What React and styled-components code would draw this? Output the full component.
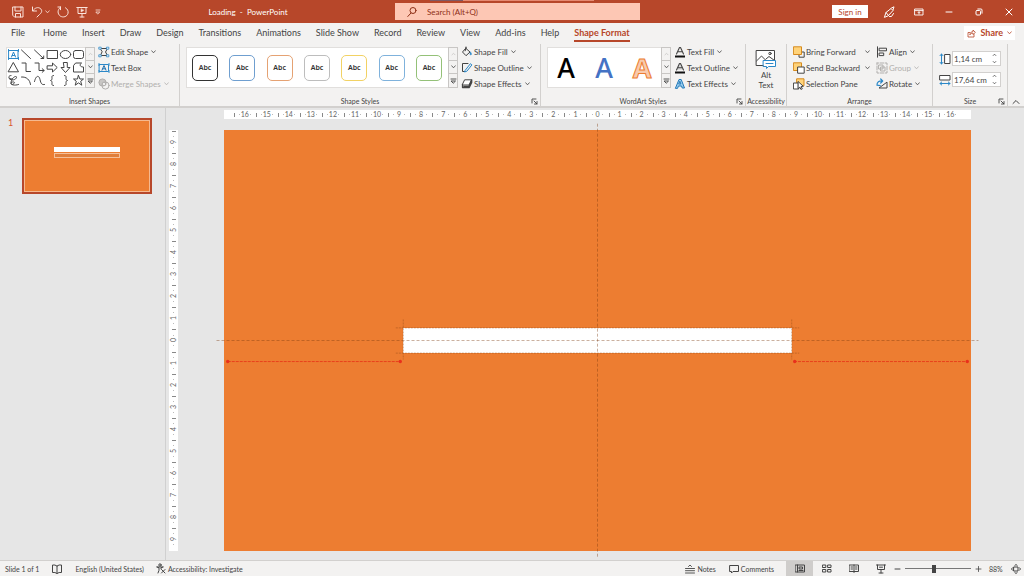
import React, { useState } from 'react'
import styled, { createGlobalStyle, css } from 'styled-components'

const brand = '#b7472a'
const orange = '#ed7d31'
const chrome = '#f3f2f1'
const ink = '#444444'
const line = '#c8c6c4'
const blue = '#2b88c8'

const GlobalStyle = createGlobalStyle`
* { box-sizing: border-box; }
body { margin: 0; }
button, input { font: inherit; color: inherit; }
body, button, input { font-family: Lato, "Noto Sans", sans-serif; }
`;

const Page = styled.div`
display: flex;
flex-direction: column;
height: 100vh;
overflow: hidden;
background: #e6e6e6;
color: ${ink};
font-size: 8px;
line-height: 10px;
`;

const Button = styled.button`
display: flex;
align-items: center;
justify-content: center;
padding: 0;
border: 0;
background: none;
white-space: nowrap;
`;

const Svg = styled.svg`
display: block;
flex: none;
fill: none;
stroke: currentColor;
stroke-width: 1;
stroke-linecap: round;
stroke-linejoin: round;
`;

const Icon = ({ w = 12, h = 12, children, ...rest }) => (
  <Svg width={w} height={h} viewBox={`0 0 ${w} ${h}`} aria-hidden="true" {...rest}>{children}</Svg>
)

const Chevron = () => <Icon w={5} h={4}><path d="M.7.8 2.5 2.8 4.3.8" strokeWidth=".8" /></Icon>

/* ---------- title bar ---------- */

const TitleBar = styled.header`
position: relative;
display: grid;
grid-template-columns: 395fr 245fr 384fr;
align-items: center;
flex: none;
height: 23px;
background: ${brand};
color: #fff;
&::before {
  content: '';
  position: absolute;
  top: 0;
  left: 42%;
  width: 16%;
  height: 1px;
  background: linear-gradient(90deg, #7d5a66 20%, #e58b73 20%);
}
`;

const TitleLeft = styled.div`
display: flex;
align-items: center;
padding-left: 12px;
`;

const QuickAccess = styled.div`
display: flex;
align-items: center;
gap: 7px;
color: #fbe3da;
`;

const QuickPair = styled.div`
display: flex;
gap: 2px;
`;

const QuickButton = styled(Button)`
height: 20px;
`;

const DocTitle = styled.div`
flex: 1;
text-align: center;
white-space: pre;
`;

const Search = styled.label`
display: flex;
align-items: center;
gap: 10px;
height: 17px;
padding-left: 12px;
background: #fdc7b4;
color: #8e2f16;
`;

const SearchInput = styled.input`
flex: 1;
min-width: 0;
padding: 0;
border: 0;
outline: 0;
background: none;
&::placeholder { color: #8e2f16; opacity: 1; }
`;

const TitleRight = styled.div`
display: flex;
align-items: center;
justify-content: flex-end;
`;

const SignIn = styled(Button)`
width: 36px;
height: 13px;
margin-right: 6px;
background: #fff;
color: ${brand};
`;

const WindowButton = styled(Button)`
width: 30px;
height: 22px;
`;

/* ---------- tabs ---------- */

const TabRow = styled.nav`
display: flex;
align-items: flex-start;
flex: none;
gap: 15px;
height: 21px;
padding: 0 9px 0 11px;
background: ${chrome};
font-size: 9px;
line-height: 12px;
`;

const Tab = styled(Button)`
height: 19px;
border-top: 2px solid transparent;
border-bottom: 2px solid transparent;
&:first-child { margin-right: 3px; }
${(p) => p.$active && css`
color: ${brand};
border-bottom-color: ${brand};
font-weight: 700;
`}
`;

const Share = styled(Button)`
gap: 4px;
height: 14px;
margin-top: 3px;
margin-left: auto;
padding: 0 3px;
background: #fff;
color: ${brand};
font-weight: 700;
`;

/* ---------- ribbon ---------- */

const Ribbon = styled.section`
display: flex;
flex: none;
height: 64px;
background: ${chrome};
border-bottom: 2px solid #d2d0ce;
`;

const Group = styled.div`
display: flex;
flex-direction: column;
flex: 0 0 auto;
min-width: ${(p) => p.$width}px;
padding: 0 ${(p) => (p.$tight ? 0 : 6)}px;
border-right: 1px solid #d2d0ce;
`;

const GroupBody = styled.div`
display: flex;
flex: 1;
gap: ${(p) => p.$gap || 3}px;
padding-top: ${(p) => p.$top || 0}px;
`;

const GroupFoot = styled.div`
display: grid;
grid-template-columns: 1fr auto 1fr;
align-items: center;
height: 10px;
font-size: 7px;
line-height: 10px;
white-space: nowrap;
& > button { justify-self: end; margin-right: -4px; }
`;

const Gallery = styled.div`
display: flex;
height: 41px;
margin-top: 3px;
width: ${(p) => p.$width}px;
border: 1px solid #e1dfdd;
background: #fff;
`;

const ShapeGrid = styled.div`
display: grid;
flex: 1;
grid-template-columns: repeat(6, 13px);
grid-auto-rows: 13px;
`;

const StyleList = styled.div`
display: flex;
flex: 1;
align-items: center;
justify-content: space-between;
padding: 0 7px 0 5px;
`;

const StyleSwatch = styled(Button)`
width: 26px;
height: 26px;
border: 1px solid ${(p) => p.$color};
border-radius: 5px;
color: #333;
font-family: "Noto Sans", sans-serif;
font-size: 7px;
font-weight: 600;
`;

const WordArtButton = styled(Button)`
width: 26px;
height: 38px;
font-family: "Noto Sans", sans-serif;
font-size: 27px;
font-weight: ${(p) => p.$weight || 500};
line-height: 38px;
color: ${(p) => p.$color};
-webkit-text-stroke: ${(p) => (p.$outline ? `1px ${p.$outline}` : '0')};
`;

const Scroller = styled.div`
display: grid;
grid-template-rows: repeat(3, 1fr);
width: 10px;
margin: -1px;
background: ${chrome};
`;

const ScrollButton = styled(Button)`
border: 1px solid ${line};
color: ${(p) => (p.disabled ? line : ink)};
& + & { border-top: 0; }
`;

const Commands = styled.div`
display: grid;
grid-auto-rows: 16px;
align-content: start;
`;

const Command = styled(Button)`
justify-content: flex-start;
gap: 1px;
color: ${(p) => (p.disabled ? '#b1afad' : ink)};
& > svg + svg { margin-left: ${(p) => (p.$spread ? 'auto' : '2px')}; }
`;

const AltText = styled(Button)`
flex: 1;
flex-direction: column;
justify-content: flex-start;
padding-top: 5px;
& > svg { margin-bottom: 1px; }
`;

const SizeFields = styled.div`
display: grid;
flex: 1;
gap: 6px;
align-content: start;
`;

const SizeField = styled.label`
display: flex;
align-items: center;
gap: 1px;
height: 15px;
`;

const SizeBox = styled.span`
display: flex;
align-items: center;
width: 49px;
height: 15px;
padding: 0 3px 0 1px;
border: 1px solid #d2d0ce;
background: #fff;
`;

const SizeInput = styled.input`
flex: 1;
min-width: 0;
padding: 0;
border: 0;
outline: 0;
background: none;
`;

const Collapse = styled(Button)`
align-items: flex-end;
width: 17px;
margin-left: auto;
padding-bottom: 1px;
`;

/* ---------- workspace ---------- */

const Workspace = styled.main`
display: flex;
flex: 1;
min-height: 0;
`;

const Thumbnails = styled.aside`
display: flex;
align-items: flex-start;
gap: 6px;
width: 166px;
padding: 10px 13px 0 8px;
border-right: 1px solid #d0d0d0;
color: #d8572f;
font-size: 9px;
line-height: 10px;
`;

const Thumb = styled(Button)`
flex: 1;
flex-direction: column;
gap: 1px;
height: 76px;
padding-bottom: 7px;
border: 2px solid ${brand};
background: ${orange};
box-shadow: inset 0 0 0 1px #f6b98f;
`;

const ThumbBar = styled.span`
width: 66px;
height: 5px;
background: ${(p) => (p.$empty ? '#e07f3c' : '#fff')};
border: ${(p) => (p.$empty ? '1px solid #f4c09a' : '0')};
`;

const SlideNumber = styled.span`
width: 8px;
`;

const Editor = styled.div`
display: grid;
flex: 1;
grid-template-columns: 9px 1fr;
grid-template-rows: 9px 1fr;
gap: 11px 46px;
padding: 2px 53px 9px 3px;
`;

const Ruler = styled.div`
display: flex;
flex-direction: ${(p) => (p.$vertical ? 'column' : 'row')};
justify-content: center;
overflow: hidden;
min-width: 0;
min-height: 0;
background: #fff;
color: #666;
font-size: 7px;
line-height: 9px;
grid-area: ${(p) => (p.$vertical ? '2 / 1' : '1 / 2')};
`;

const Mark = styled.span`
display: flex;
align-items: center;
justify-content: center;
flex: 0 0 calc(100% / ${(p) => p.$units});
min-width: 0;
min-height: 0;
background-repeat: no-repeat;
background-image: linear-gradient(#888, #888), linear-gradient(#bbb, #bbb), linear-gradient(#bbb, #bbb);
${(p) => p.$vertical ? css`
background-size: 4px 1px, 1px 1px, 1px 1px;
background-position: 50% 0, 50% 24%, 50% 76%;
& > span { writing-mode: vertical-rl; transform: rotate(180deg); }
` : css`
background-size: 1px 4px, 1px 1px, 1px 1px;
background-position: 0 50%, 24% 50%, 76% 50%;
`}
`;

const Slide = styled.div`
position: relative;
grid-area: 2 / 2;
background: ${orange};
`;

const LoadingBar = styled.div`
position: absolute;
left: 24%;
top: 47%;
width: 52%;
height: 6%;
background: #fff;
`;

const Guides = styled.svg`
position: absolute;
inset: 0;
width: 100%;
height: 100%;
overflow: visible;
`;

/* ---------- status bar ---------- */

const StatusBar = styled.footer`
display: flex;
align-items: center;
flex: none;
height: 16px;
padding: 0 3px 0 5px;
border-top: 1px solid #d2d0ce;
background: ${chrome};
font-size: 7px;
line-height: 10px;
white-space: nowrap;
`;

const StatusItems = styled.div`
display: flex;
align-items: center;
gap: 12px;
`;

const StatusRight = styled.div`
display: flex;
align-items: center;
margin-left: auto;
`;

const StatusButton = styled(Button)`
gap: 2px;
margin-right: ${(p) => p.$after || 0}px;
`;

const ViewButton = styled(Button)`
width: 27px;
height: 15px;
background: ${(p) => (p.$active ? '#cfcdcb' : 'none')};
`;

const Zoom = styled.input`
appearance: none;
width: 66px;
height: 12px;
margin: 0 4px;
background: linear-gradient(#777, #777) center / 100% 1px no-repeat;
&::-webkit-slider-thumb {
  appearance: none;
  width: 4px;
  height: 8px;
  background: #444;
}
`;

const Percent = styled.span`
width: 29px;
padding-left: 7px;
`;

const EditPoints = () => (
  <Icon><path d="M2.5 2.5h7L7.5 6l2 3.5h-7L4 6z" /><g fill="#fff" stroke={blue} strokeWidth=".8"><path d="M1.2 1.2h2v2h-2zM8.8 1.2h2v2h-2zM1.2 8.8h2v2h-2zM8.8 8.8h2v2h-2z" /></g></Icon>
)
const TextBoxIcon = () => (
  <Icon><path d="M1.5 2.5h9v7h-9z" stroke={blue} /><path d="m4 8.2 2-4.7 2 4.7M4.8 6.8h2.4" stroke="#1e6fb0" /><path d="M1 1.5v2M11 1.5v2M1 8.5v2M11 8.5v2" stroke={blue} /></Icon>
)
const MergeIcon = () => (
  <Icon><circle cx="4.5" cy="4.5" r="3.6" fill="#c8c6c4" /><circle cx="7.5" cy="7.5" r="3.6" /><circle cx="6" cy="6" r="1.8" fill="#eee" /></Icon>
)
const FillIcon = () => (
  <Icon><path d="m5 2.5 4 3.5-4 3.7L1.8 6.3zM5 2.5V1M5 1.6l-.8 3.2" /><path d="M9.6 6.2c.6 1 1 1.5.9 2-.2.8-1.4.8-1.6 0 0-.5.4-1.2.7-2z" fill={blue} stroke={blue} strokeWidth=".6" /></Icon>
)
const OutlineIcon = () => (
  <Icon><path d="M7 1.5H1.5v8H4" /><path d="M4.3 8.2 9.4 1.7l1.5 1.2-5 6.3-2 .7z" stroke={blue} /></Icon>
)
const EffectsIcon = () => (
  <Icon><path d="M4 1.8h6.7L8.3 7H1.5z" fill="#fff" /><path d="M1.5 7v2.5h6.8L10.7 4.4V1.8L8.3 7v2.5M3 8.3h4.5" strokeWidth="1.3" /></Icon>
)
const LetterIcon = ({ color = ink, fill = 'none' }) => (
  <Icon><path d="m2.5 8 3-6.5h1L9.5 8M3.6 5.8h4.8" stroke={color} fill={fill} strokeWidth="1.1" /><path d="M1 9.5h10v2H1z" fill="#111" stroke="none" /></Icon>
)
const TextEffectsIcon = () => (
  <Icon><path d="M1.5 10 5 1.5h2.2l3.3 8.5H8.2l-.6-2H4.4l-.7 2zM5.1 6h1.8L6 3.6z" stroke="#1f78b8" fill="#9fd0f0" /></Icon>
)
const LayerIcon = ({ kind }) => (
  <Icon>
    {kind === 'forward' && <><path d="M8.5 6h2.7v5.2H6V8.5" /><path d="M.8.8h7.7v7.7H.8z" fill="#ffd37a" stroke="#d68a1d" /></>}
    {kind === 'backward' && <><path d="M.8.8h7.7v7.7H.8z" fill="#ffd37a" stroke="#d68a1d" /><path d="M5 5h6.2v6.2H5z" fill="#fff" /></>}
    {kind === 'select' && <><path d="M4 .8h7v7H4z" fill="#ffd37a" stroke="#d68a1d" /><path d="M.8 5h5v6h-5z" fill="#fff" /><path d="m5.3 3.7 5 4.6-2.2.2 1.2 2.3-1.4.6-1-2.3-1.6 1.4z" fill="#fff" /></>}
  </Icon>
)
const AlignIcon = () => <Icon><path d="M1.5.8v10.4M3.5 2.2h7v2.6h-7zM3.5 7h4.2v2.6H3.5z" /></Icon>
const GroupIcon = () => <Icon><path d="M1 1h1.6M9.4 1H11v1.6M11 9.4V11H9.4M2.6 11H1V9.4M1 2.6V1M1 4v4M11 4v4M4 1h4M4 11h4M3 3h4v4H3zM5 5h4v4H5z" /></Icon>
const RotateIcon = () => <Icon><path d="M11 4.5V10H3.4z" /><path d="M1 7.2C.8 4.2 3 2.6 6.5 3M4.7 1l2 2-2 2M1 7.2l3.2.4" stroke={blue} strokeWidth="1.2" /></Icon>

const shapes = [
  ['Text box', <path d="M2 2.5h9v8H2zM1.5 1.5v2M11.5 1.5v2M1.5 9.5v2M11.5 9.5v2M4.5 9l2-5 2 5M5.2 7.5h2.6" stroke={blue} />],
  ['Line', <path d="m1.5 2 9 8.5" />],
  ['Arrow', <path d="m1.5 2 9 8.5M8 10.5h2.7V8" />],
  ['Rectangle', <path d="M1.5 2.5h10v8h-10z" />],
  ['Oval', <ellipse cx="6.5" cy="6.5" rx="5.2" ry="4" />],
  ['Rounded rectangle', <rect x="1.5" y="2.5" width="10" height="8" rx="2" />],
  ['Triangle', <path d="m6.5 1.8 5 9h-10z" />],
  ['Elbow', <path d="M2 2h4v8.5h4.5" />],
  ['Elbow arrow', <path d="M2 2h4v7.5h5M9.2 7.7l2 1.8-2 1.8" />],
  ['Right arrow', <path d="M1.5 4.8h5V2l4.7 4.5L6.5 11V8.2h-5z" />],
  ['Down arrow', <path d="M4.7 1.5h3.6v5H11l-4.5 5L2 6.5h2.7z" />],
  ['Freeform shape', <path d="M4 2h5.500C7.500 3.500 7.500 6 11.500 6v5h-10V5z" />],
  ['Scribble', <path d="M5.500 5C1 5.500.5 1.500 4 1.500M2 4.500C5 7.500 9 5.500 9.500 3.500S6 2.500 4.500 6.500 5 11.500 7 9.500s-2.500-2-3-.5 3 3 7.500 1.500" />],
  ['Arc', <path d="M1.5 3c5-.5 8.500 3 9 7.500" />],
  ['Curve', <path d="M1.5 7.5C3 1 6 1 7 5.500s2 5.500 4.500 5" />],
  ['Left brace', <path d="M7.5 1.5c-2 0-1.500 1-1.500 3 0 1.200-.5 1.800-1.500 2 1 .2 1.500.8 1.500 2 0 2-.5 3 1.500 3" />],
  ['Right brace', <path d="M5.5 1.5c2 0 1.500 1 1.500 3 0 1.200.5 1.800 1.500 2-1 .2-1.500.8-1.500 2 0 2 .5 3-1.500 3" />],
  ['Star', <path d="m6.5 1.5 1.400 3.500h3.600L8.700 7.300l1.100 3.900-3.300-2.300-3.300 2.300 1.100-3.900L1.500 5h3.600z" />],
]

const swatches = ['#333333', '#6f9fd0', '#e5a273', '#bdbdbd', '#f2d264', '#7fb2dc', '#94c178']

const tabs = ['File', 'Home', 'Insert', 'Draw', 'Design', 'Transitions', 'Animations', 'Slide Show', 'Record', 'Review', 'View', 'Add-ins', 'Help', 'Shape Format']

const GalleryScroll = () => (
  <Scroller>
    <ScrollButton disabled aria-label="Row up"><Icon w={5} h={4}><path d="M1 2.800 2.500 1.300 4 2.800" strokeWidth=".8" /></Icon></ScrollButton>
    <ScrollButton aria-label="Row down"><Chevron /></ScrollButton>
    <ScrollButton aria-label="More"><Icon w={7} h={6}><path d="M1 1h5M1.500 3h4l-2 2z" strokeWidth=".9" /></Icon></ScrollButton>
  </Scroller>
)

const Foot = ({ label, launcher }) => (
  <GroupFoot>
    <span />
    <span>{label}</span>
    {launcher && <Button aria-label={`${label} options`}><Icon w={7} h={7}><path d="M1 5V1h4M3 3l3 3M6 3.500V6H3.500" strokeWidth=".9" /></Icon></Button>}
  </GroupFoot>
)

const Size = ({ id, label, value, icon }) => (
  <SizeField htmlFor={id} aria-label={label}>
    {icon}
    <SizeBox>
      <SizeInput id={id} defaultValue={value} aria-label={label} />
      <Icon w={5} h={11}><path d="m1.200 2.500 1.300-1.300 1.300 1.300M1.200 8.500l1.300 1.300 1.300-1.300" strokeWidth=".8" /></Icon>
    </SizeBox>
  </SizeField>
)

const RulerMarks = ({ max, units, vertical }) => (
  <Ruler $vertical={vertical}>
    {Array.from({ length: max * 2 + 1 }, (_, i) => (
      <Mark key={i} $units={units} $vertical={vertical}><span>{Math.abs(i - max)}</span></Mark>
    ))}
  </Ruler>
)

const Header = () => (
  <TitleBar>
    <TitleLeft>
      <QuickAccess>
        <QuickButton aria-label="Save"><Icon><path d="M1 1h10v10H2.500L1 9.500zM3 1v4h6V1M3.500 11V7.500h5V11" /></Icon></QuickButton>
        <QuickPair>
          <QuickButton aria-label="Undo"><Icon><path d="M1.500 1v4h4M1.800 4.800C4 1.500 7 1 9 2.300c3 2 1.500 4.700-.5 6.200L6 11" /></Icon></QuickButton>
          <QuickButton aria-label="Undo list"><Chevron /></QuickButton>
        </QuickPair>
        <QuickButton aria-label="Redo"><Icon><path d="M3.500 1H.9M3.500 1v2.700M3.300 1.500C0 4 .6 8 3.200 10c3 2 7 .6 7.800-2.700.5-2.400-.5-4.300-2.500-5.500" /></Icon></QuickButton>
        <QuickButton aria-label="Start from beginning"><Icon><path d="M.8 1.500h10.400M2 1.500V7.500h8v-6M6 7.500V11M4 11h4" /><path d="M5 3v3l2.700-1.500z" fill="currentColor" strokeWidth=".5" /></Icon></QuickButton>
        <QuickButton aria-label="Customize"><Icon w={6} h={6}><path d="M1 1h4M1.200 3h3.600L3 4.800z" strokeWidth=".8" /></Icon></QuickButton>
      </QuickAccess>
      <DocTitle>Loading  -  PowerPoint</DocTitle>
    </TitleLeft>
    <Search htmlFor="search">
      <Icon w={10}><circle cx="6" cy="4.500" r="3" /><path d="M4 7 .8 10.500" /></Icon>
      <SearchInput id="search" placeholder="Search (Alt+Q)" aria-label="Search" />
    </Search>
    <TitleRight>
      <SignIn>Sign in</SignIn>
      <WindowButton aria-label="Ink"><Icon><path d="M1.500 11 3 6.500 8 2.500l2 2-4.500 5zM3 6.500l2.500 3M8.500 2 11 .8l-1 3.200M6.500 10.500h2l2-3" /></Icon></WindowButton>
      <WindowButton aria-label="Ribbon display options"><Icon w={10} h={8}><path d="M1 1h8v6H1zM1 2.600h8M5 6V4M4 4.700l1-1 1 1" strokeWidth=".9" /></Icon></WindowButton>
      <WindowButton aria-label="Minimize"><Icon w={8} h={8}><path d="M1 4h6" /></Icon></WindowButton>
      <WindowButton aria-label="Restore"><Icon w={8} h={8}><rect x="1" y="2.500" width="4.500" height="4.500" rx="1" /><path d="M2.800 1h3.200q1 0 1 1v3.200" /></Icon></WindowButton>
      <WindowButton aria-label="Close"><Icon w={8} h={8}><path d="m1 1 6 6M7 1 1 7" /></Icon></WindowButton>
    </TitleRight>
  </TitleBar>
)

const App = () => {
  const [active, setActive] = useState('Shape Format')
  const [zoom, setZoom] = useState(44)

  return (
    <Page>
      <GlobalStyle />
      <Header />
      <TabRow>
        {tabs.map((tab) => (
          <Tab key={tab} $active={tab === active} onClick={() => setActive(tab)}>{tab}</Tab>
        ))}
        <Share>
          <Icon w={9} h={9}><path d="M3 3.500H1V8h6V5.500M3 5.500C3.200 3.600 4.300 2.700 6 2.700V1l2.400 2.400L6 5.500V4.200C4.800 4.200 3.800 4.500 3 5.500z" strokeWidth=".8" /></Icon>
          Share
          <Chevron />
        </Share>
      </TabRow>

      <Ribbon>
        <Group $width={180}>
          <GroupBody>
            <Gallery $width={89}>
              <ShapeGrid>
                {shapes.map(([name, drawing]) => (
                  <Button key={name} aria-label={name}><Icon w={13} h={13}>{drawing}</Icon></Button>
                ))}
              </ShapeGrid>
              <GalleryScroll />
            </Gallery>
            <Commands>
              <Command><EditPoints />Edit Shape <Chevron /></Command>
              <Command><TextBoxIcon />Text Box</Command>
              <Command disabled><MergeIcon />Merge Shapes <Chevron /></Command>
            </Commands>
          </GroupBody>
          <Foot label="Insert Shapes" />
        </Group>

        <Group $width={361}>
          <GroupBody>
            <Gallery $width={272}>
              <StyleList>
                {swatches.map((color) => <StyleSwatch key={color} $color={color}>Abc</StyleSwatch>)}
              </StyleList>
              <GalleryScroll />
            </Gallery>
            <Commands>
              <Command><FillIcon />Shape Fill <Chevron /></Command>
              <Command><OutlineIcon />Shape Outline <Chevron /></Command>
              <Command><EffectsIcon />Shape Effects <Chevron /></Command>
            </Commands>
          </GroupBody>
          <Foot label="Shape Styles" launcher />
        </Group>

        <Group $width={205}>
          <GroupBody>
            <Gallery $width={124}>
              <StyleList>
                <WordArtButton $color="#000">A</WordArtButton>
                <WordArtButton $color="#4472c4">A</WordArtButton>
                <WordArtButton $color="#f8cbad" $outline={orange} $weight={700}>A</WordArtButton>
              </StyleList>
              <GalleryScroll />
            </Gallery>
            <Commands>
              <Command><LetterIcon />Text Fill <Chevron /></Command>
              <Command><LetterIcon fill="#ddd" />Text Outline <Chevron /></Command>
              <Command><TextEffectsIcon />Text Effects <Chevron /></Command>
            </Commands>
          </GroupBody>
          <Foot label="WordArt Styles" launcher />
        </Group>

        <Group $width={41} $tight>
          <GroupBody>
            <AltText>
              <Icon w={22} h={20}>
                <path d="M1.500 1.500h18v15h-18z" fill="#fff" />
                <path d="m1.500 12 5-5 6 6M11 10l3-2.500 5.500 4" />
                <circle cx="15" cy="4.500" r="1.200" />
                <path d="M8.500 11.500h12v6h-7l-2 2v-2h-3z" fill="#fff" stroke={blue} />
                <path d="M11 14.500h7" stroke={blue} />
              </Icon>
              <span>Alt</span>
              <span>Text</span>
            </AltText>
          </GroupBody>
          <Foot label="Accessibility" />
        </Group>

        <Group $width={146}>
          <GroupBody $gap={6}>
            <Commands>
              <Command $spread><LayerIcon kind="forward" />Bring Forward <Chevron /></Command>
              <Command $spread><LayerIcon kind="backward" />Send Backward&nbsp;&nbsp; <Chevron /></Command>
              <Command><LayerIcon kind="select" />Selection Pane</Command>
            </Commands>
            <Commands>
              <Command><AlignIcon />Align <Chevron /></Command>
              <Command disabled><GroupIcon />Group <Chevron /></Command>
              <Command><RotateIcon />Rotate <Chevron /></Command>
            </Commands>
          </GroupBody>
          <Foot label="Arrange" />
        </Group>

        <Group $width={74}>
          <GroupBody $top={7}>
            <SizeFields>
              <Size id="height" label="Shape height" value="1,14 cm" icon={<Icon><path d="M6 1.500h5v9H6z" fill="#fff" /><path d="M2.500 1v10M1 2.700 2.500 1 4 2.700M1 9.300 2.500 11 4 9.300" stroke={blue} /></Icon>} />
              <Size id="width" label="Shape width" value="17,64 cm" icon={<Icon><path d="M1 1.500h10v4.500H1z" fill="#fff" /><path d="M1 9.500h10M2.700 8 1 9.500 2.700 11M9.300 8 11 9.500 9.300 11" stroke={blue} /></Icon>} />
            </SizeFields>
          </GroupBody>
          <Foot label="Size" launcher />
        </Group>
        <Collapse aria-label="Collapse ribbon"><Icon w={8} h={6}><path d="m1 4.500 3-3 3 3" /></Icon></Collapse>
      </Ribbon>

      <Workspace>
        <Thumbnails>
          <SlideNumber>1</SlideNumber>
          <Thumb aria-label="Slide 1">
            <ThumbBar />
            <ThumbBar $empty />
          </Thumb>
        </Thumbnails>
        <Editor>
          <RulerMarks max={16} units={33.87} />
          <RulerMarks max={9} units={19.05} vertical />
          <Slide>
            <LoadingBar />
            <Guides aria-hidden="true">
              <g stroke="#7a3a10" strokeOpacity=".4" strokeDasharray="3 2">
                <line x1="-1%" x2="101%" y1="50%" y2="50%" />
                <line x1="50%" x2="50%" y1="-1.500%" y2="101.500%" />
              </g>
              <g stroke="#a0521c" strokeOpacity=".5" strokeDasharray="2 1">
                <line x1="24%" x2="24%" y1="45%" y2="54.500%" />
                <line x1="76%" x2="76%" y1="45%" y2="54.500%" />
                <line x1="23%" x2="77%" y1="47%" y2="47%" />
                <line x1="23%" x2="77%" y1="53%" y2="53%" />
              </g>
              <g stroke="#e8401c" strokeDasharray="3 1">
                <line x1="0.500%" x2="23.700%" y1="55%" y2="55%" />
                <line x1="76.300%" x2="99.500%" y1="55%" y2="55%" />
              </g>
              <g fill="#e8301c">
                {['0.500%', '23.600%', '76.400%', '99.500%'].map((x) => <circle key={x} cx={x} cy="55%" r="1.700" />)}
              </g>
            </Guides>
          </Slide>
        </Editor>
      </Workspace>

      <StatusBar>
        <StatusItems>
          <span>Slide 1 of 1</span>
          <Button aria-label="Spelling"><Icon><path d="M6 3Q4 1.500 1.500 2v7.500Q4 9 6 10.500 8 9 10.500 9.500V2Q8 1.500 6 3v7.500" /></Icon></Button>
          <Button>English (United States)</Button>
          <StatusButton>
            <Icon w={10} h={11}><circle cx="4" cy="2" r="1.200" /><path d="M1 4l2 .8v2.500L2 10M7 4l-2 .8v1M1 4h6M5.500 6.500l3.500 3.500M9 6.500 5.500 10" /></Icon>
            Accessibility: Investigate
          </StatusButton>
        </StatusItems>
        <StatusRight>
          <StatusButton $after={13}><Icon w={10} h={11}><path d="M3.500 3.500 5 2l1.500 1.500M.5 5.500h9M.5 7.700h9M.5 10h9" strokeWidth=".9" /></Icon>Notes</StatusButton>
          <StatusButton $after={12}><Icon w={10} h={10}><path d="M1 1.500h8.500v6H4L2.500 9V7.500H1z" /></Icon>Comments</StatusButton>
          <ViewButton $active aria-label="Normal view"><Icon w={10} h={9}><path d="M.5 1h9v7h-9zM2.500 1v7M4.500 3h3v2h-3zM4 6.500h4" /></Icon></ViewButton>
          <ViewButton aria-label="Slide sorter"><Icon w={10} h={9}><path d="M.8 1h3v2.500h-3zM6 1h3v2.500H6zM.8 5.500h3V8h-3zM6 5.500h3V8H6z" /></Icon></ViewButton>
          <ViewButton aria-label="Reading view"><Icon w={10} h={9}><path d="M.5 1h9v6.500h-9zM5 1v7.500M2 3h1.500M2 5h1.500M6.500 3H8M6.500 5H8" /></Icon></ViewButton>
          <ViewButton aria-label="Slide show"><Icon w={10} h={10}><path d="M.5 1h9M1.500 1v4.500h7V1M5 5.500V9M3 9h4M3.500 3.200h3" /></Icon></ViewButton>
          <Button aria-label="Zoom out"><Icon w={7} h={8}><path d="M1 4h5" /></Icon></Button>
          <Zoom type="range" aria-label="Zoom" value={zoom} onChange={(e) => setZoom(e.target.value)} />
          <Button aria-label="Zoom in"><Icon w={7} h={8}><path d="M1 4h5M3.500 1.500v5" strokeWidth=".8" /></Icon></Button>
          <Percent>88%</Percent>
          <Button aria-label="Fit to window"><Icon w={10} h={10}><path d="M3 3h4v4H3zM3.800 1.500 5 .5l1.200 1M3.800 8.500 5 9.500l1.200-1M1.500 3.800.5 5l1 1.200M8.500 3.800 9.500 5l-1 1.200" /></Icon></Button>
        </StatusRight>
      </StatusBar>
    </Page>
  )
}

export default App
